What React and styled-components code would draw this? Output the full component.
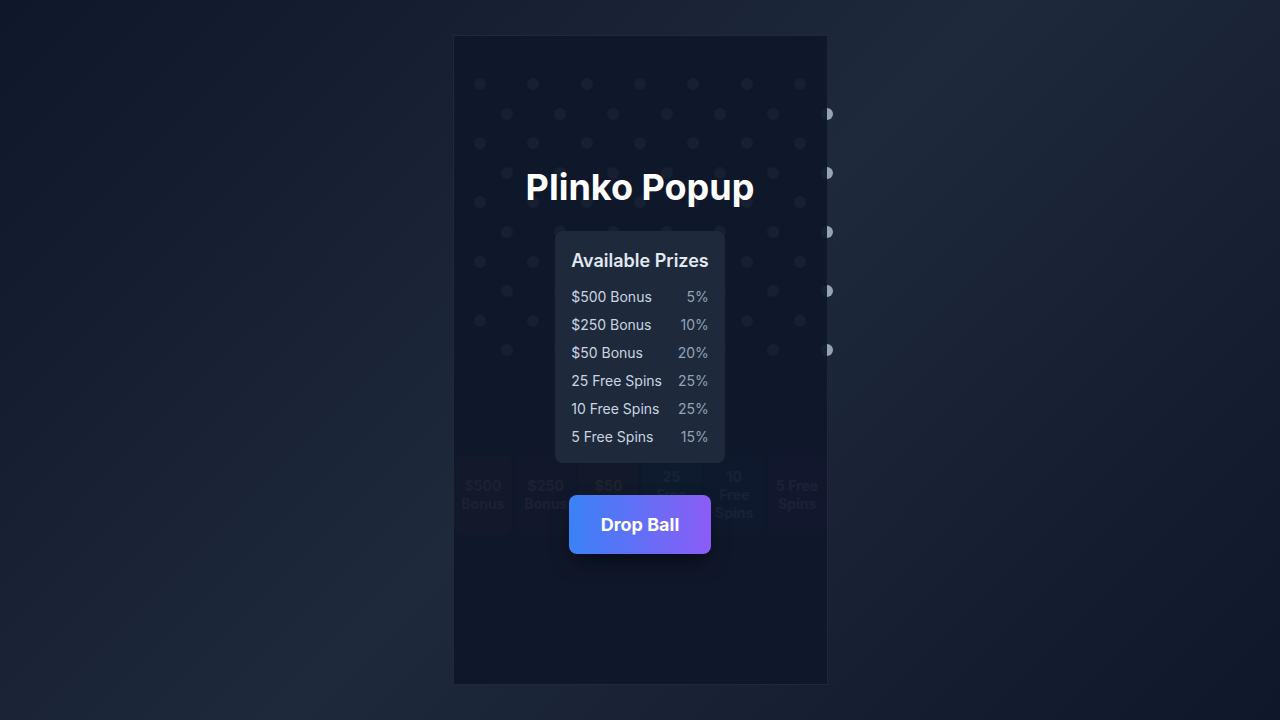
import React from 'react';
import styled, { createGlobalStyle } from 'styled-components';

const GlobalStyle = createGlobalStyle`
  * { box-sizing: border-box; }
  body {
    margin: 0;
    font-family: 'Inter', 'Noto Sans', sans-serif;
    background: linear-gradient(135deg, #0f172a 0%, #1e293b 50%, #0f172a 100%);
    min-height: 100vh;
  }
`;

const Page = styled.div`
  min-height: 100vh;
  display: flex;
  align-items: center;
  justify-content: center;
`;

const Board = styled.div`
  position: relative;
  width: 375px;
  height: 650px;
  background: #111827;
  border: 1px solid rgba(148, 163, 184, 0.12);
  display: flex;
  flex-direction: column;
`;

const PegField = styled.div`
  position: relative;
  height: 419px;
  flex-shrink: 0;
`;

const Peg = styled.span`
  position: absolute;
  width: 12px;
  height: 12px;
  margin: -6px 0 0 -6px;
  border-radius: 50%;
  background: #94a3b8;
`;

const Slots = styled.div`
  display: grid;
  grid-template-columns: repeat(6, 1fr);
  gap: 4px;
`;

const Slot = styled.div`
  height: 80px;
  border-radius: 8px;
  padding: 0 6px;
  display: flex;
  align-items: center;
  justify-content: center;
  text-align: center;
  font-size: 14px;
  font-weight: 700;
  line-height: 18px;
  background: ${p => p.$bg};
  color: ${p => p.$fg};
`;

const Overlay = styled.div`
  position: absolute;
  inset: 0;
  background: rgba(15, 23, 42, 0.94);
  display: flex;
  flex-direction: column;
  align-items: center;
  justify-content: center;
`;

const Title = styled.h1`
  margin: 0 0 24px;
  font-size: 36px;
  line-height: 40px;
  font-weight: 700;
  color: #ffffff;
`;

const PrizeCard = styled.div`
  padding: 16px;
  border-radius: 8px;
  background: #1e293b;
  margin-bottom: 32px;
`;

const CardTitle = styled.h2`
  margin: 0 0 12px;
  font-size: 18px;
  line-height: 28px;
  font-weight: 600;
  color: #e2e8f0;
  white-space: nowrap;
`;

const PrizeRow = styled.div`
  display: flex;
  justify-content: space-between;
  gap: 12px;
  font-size: 14px;
  line-height: 20px;
  white-space: nowrap;
  & + & { margin-top: 8px; }
`;

const PrizeName = styled.span`
  color: #cbd5e1;
`;

const PrizeOdds = styled.span`
  color: #94a3b8;
`;

const DropButton = styled.button`
  border: 0;
  border-radius: 8px;
  padding: 16px 32px;
  font-family: inherit;
  font-size: 18px;
  line-height: 27px;
  font-weight: 700;
  color: #ffffff;
  background: linear-gradient(90deg, #3b82f6, #8b5cf6);
  box-shadow: 0 10px 25px -5px rgba(0, 0, 0, 0.45), 0 8px 10px -6px rgba(0, 0, 0, 0.3);
  cursor: pointer;
`;

const prizes = [
  { name: '$500 Bonus', odds: '5%', bg: 'rgba(239,68,68,0.3)', fg: '#fca5a5' },
  { name: '$250 Bonus', odds: '10%', bg: 'rgba(244,63,94,0.25)', fg: '#fda4af' },
  { name: '$50 Bonus', odds: '20%', bg: 'rgba(245,158,11,0.25)', fg: '#fcd34d' },
  { name: '25 Free Spins', odds: '25%', bg: 'rgba(6,182,212,0.25)', fg: '#67e8f9' },
  { name: '10 Free Spins', odds: '25%', bg: 'rgba(59,130,246,0.3)', fg: '#93c5fd' },
  { name: '5 Free Spins', odds: '15%', bg: 'rgba(139,92,246,0.3)', fg: '#c4b5fd' },
];

const W = 373;
const pegs = [];
for (let r = 0; r < 10; r++) {
  for (let i = 0; i < 7; i++) {
    const x = r % 2 === 0 ? (i + 0.5) * W / 7 : (i + 1) * W / 7;
    pegs.push({ x, y: 48 + r * 29.6 });
  }
}

const App = () => {
  return (
    <>
      <GlobalStyle />
      <Page>
        <Board>
          <PegField>
            {pegs.map((p, i) => (
              <Peg key={i} style={{ left: p.x, top: p.y }} />
            ))}
          </PegField>
          <Slots>
            {prizes.map(p => (
              <Slot key={p.name} $bg={p.bg} $fg={p.fg}>{p.name}</Slot>
            ))}
          </Slots>
          <Overlay>
            <Title>Plinko Popup</Title>
            <PrizeCard>
              <CardTitle>Available Prizes</CardTitle>
              {prizes.map(p => (
                <PrizeRow key={p.name}>
                  <PrizeName>{p.name}</PrizeName>
                  <PrizeOdds>{p.odds}</PrizeOdds>
                </PrizeRow>
              ))}
            </PrizeCard>
            <DropButton>Drop Ball</DropButton>
          </Overlay>
        </Board>
      </Page>
    </>
  );
};

export default App;
